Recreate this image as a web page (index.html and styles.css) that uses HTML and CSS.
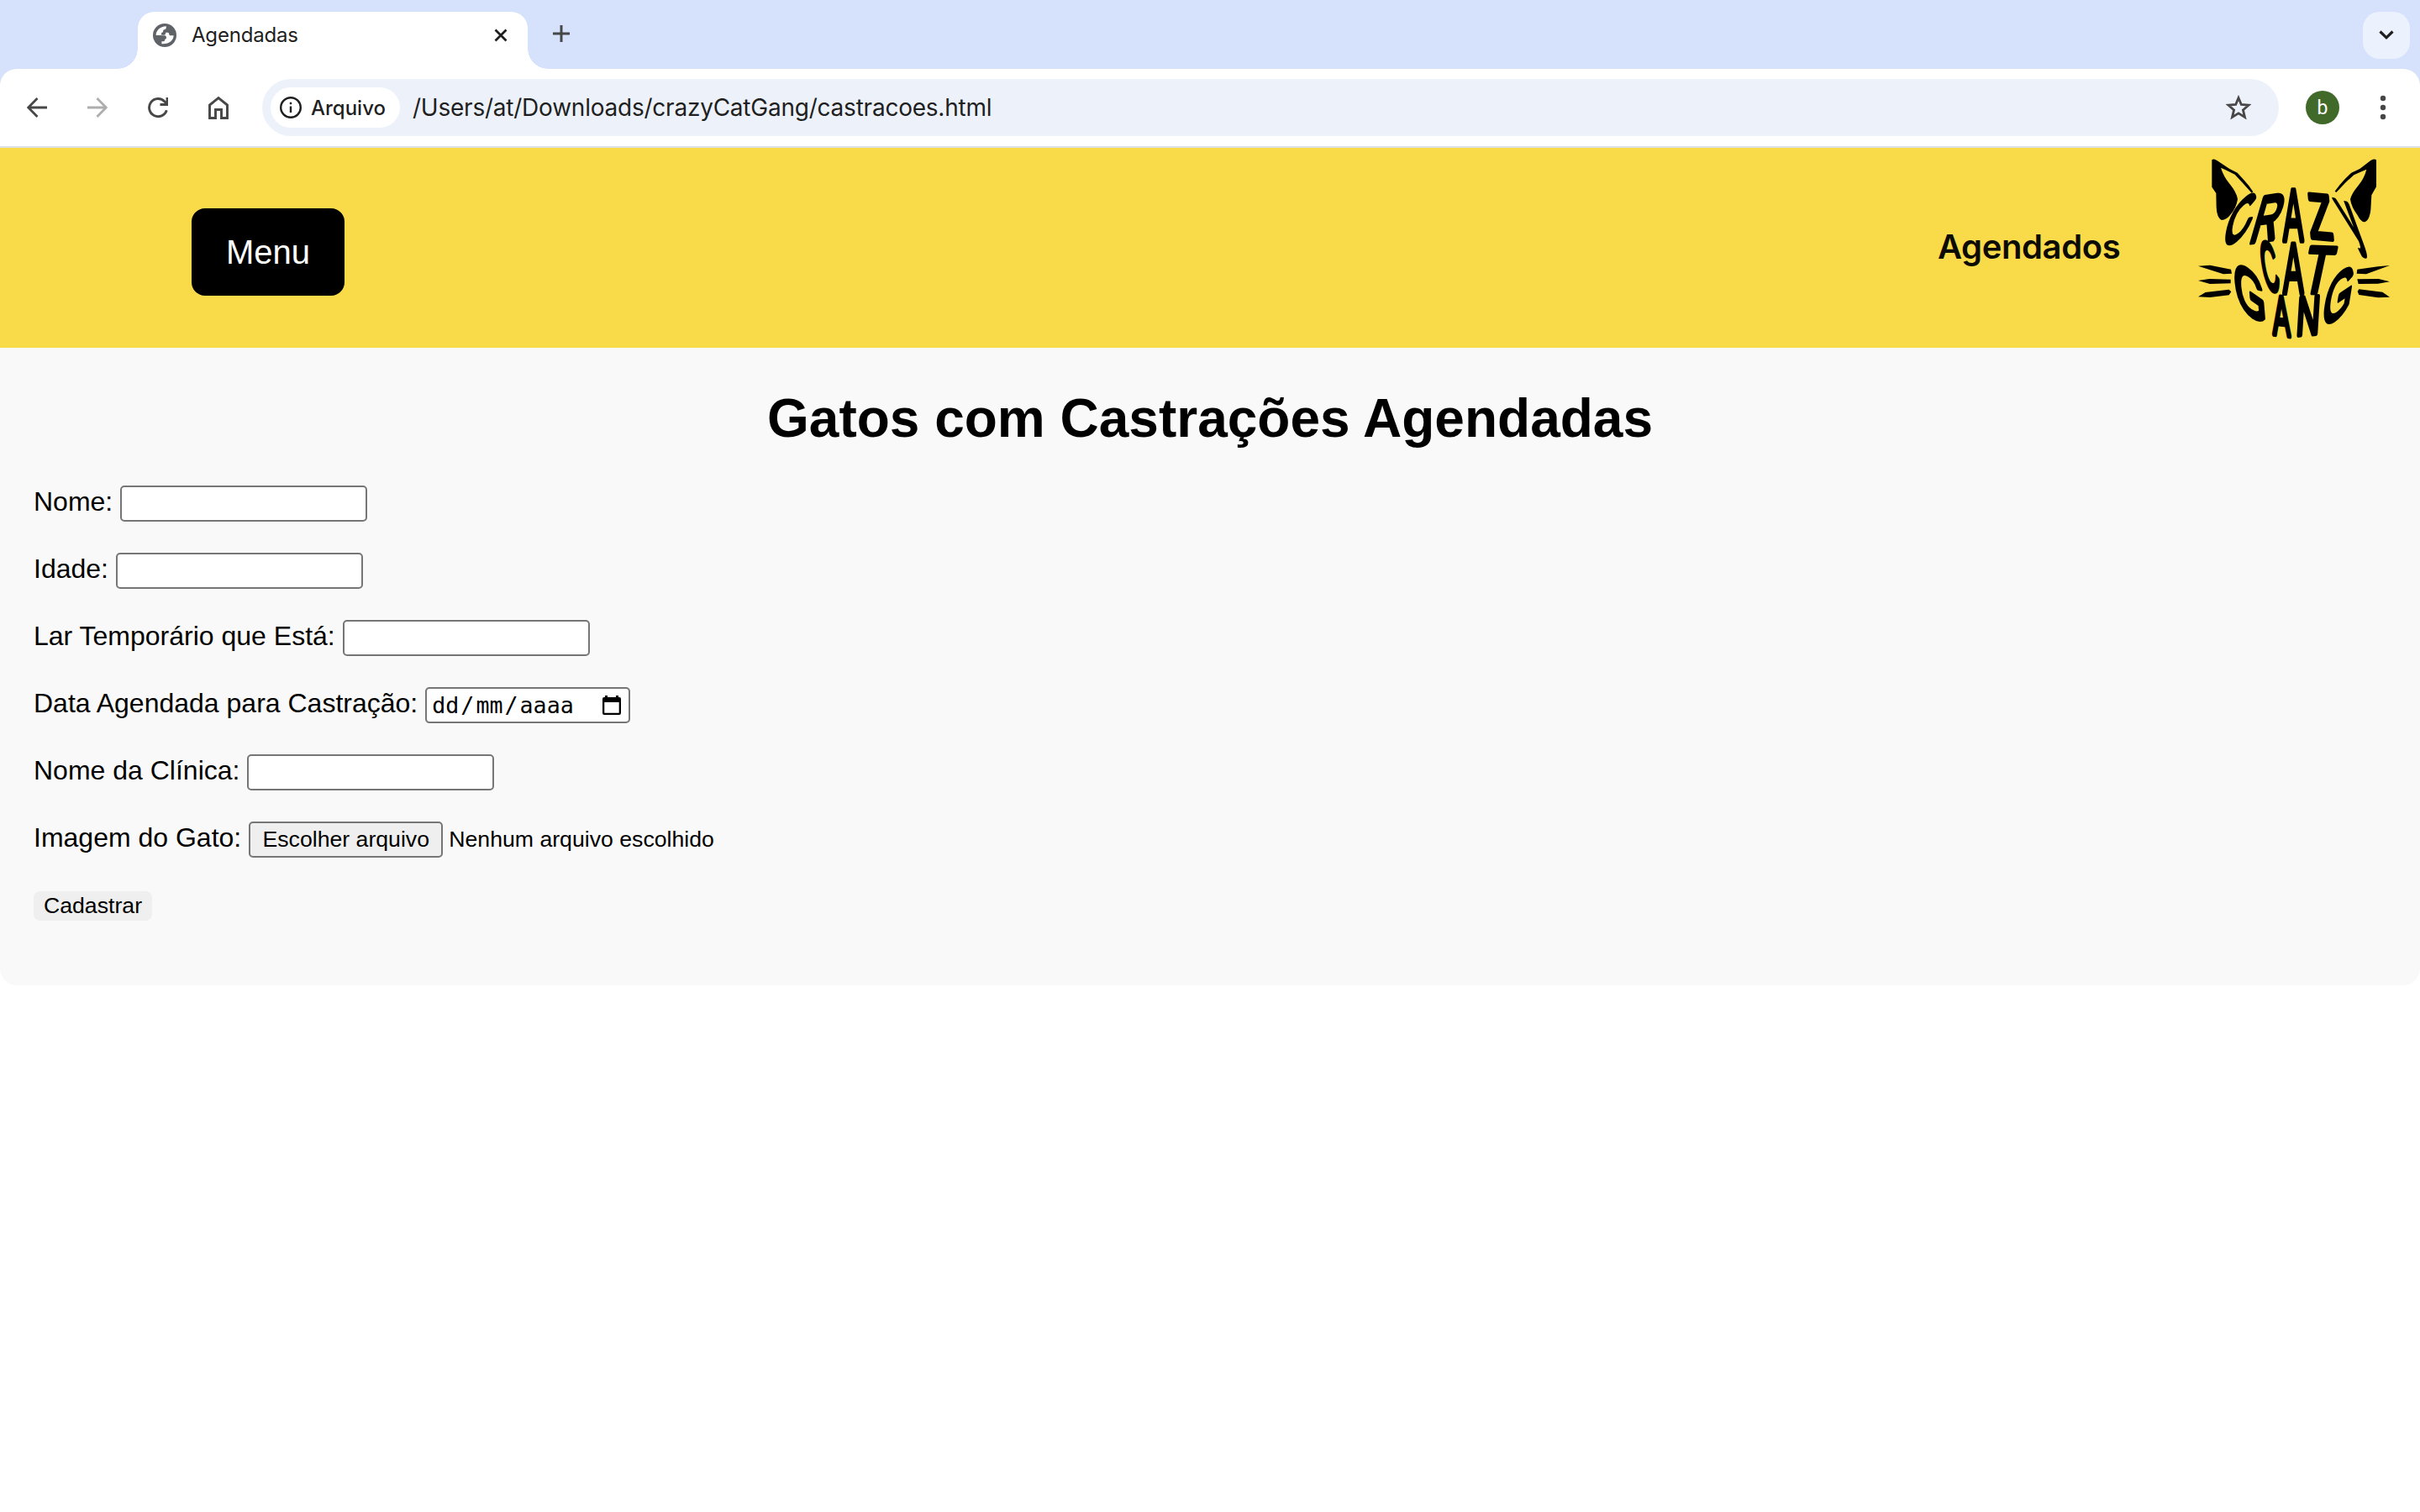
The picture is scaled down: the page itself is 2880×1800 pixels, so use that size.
FILE: index.html
```html
<!DOCTYPE html>
<html lang="pt-BR">
<head>
<meta charset="utf-8">
<title>Agendadas</title>
<link rel="stylesheet" href="styles.css">
</head>
<body>
<div class="browser">
  <div class="tabstrip">
    <div class="tab">
      <svg class="globe" viewBox="0 0 28 28"><circle cx="14" cy="14" r="14" fill="#5f6368"/><path d="M3.600 14C3.600 8.300 8.500 3.300 15.800 3.200V5q0 2-2.300 2.300-1.400.2-1.400 2 0 1.700-2 1.800v2.900zM15.200 10.800h2.300q1.800 0 1.800 2 0 1.500 1.700 1.500h3.600c.2 5.200-5 10.500-14.200 10v-3h2.200q1.600 0 1.600-1.800 0-1.500 1.700-1.500V16q0-1.700-2-1.800H10v-.4h3.300q1.900 0 1.900-3z" fill="#fff"/></svg>
      <span class="tab-title">Agendadas</span>
      <svg class="close" viewBox="0 0 16 16"><path d="M1.500 1.500l13 13M14.500 1.500l-13 13" stroke="#1f1f1f" stroke-width="2.800"/></svg>
    </div>
    <svg class="plus" viewBox="0 0 20 20"><path d="M10 0v20M0 10h20" stroke="#474747" stroke-width="3"/></svg>
    <div class="tab-search"><svg width="18" height="12" viewBox="0 0 18 12"><path d="M1.500 1.500L9 8.800l7.500-7.300" fill="none" stroke="#1f1f1f" stroke-width="3.200"/></svg></div>
  </div>
  <div class="toolbar">
    <svg class="nav" viewBox="0 0 24 28"><path d="M24 14H2M12.500 3L1.700 14l10.800 11" fill="none" stroke="#474747" stroke-width="2.800"/></svg>
    <svg class="nav" viewBox="0 0 24 28"><path d="M0 14h22M11.500 3l10.800 11-10.800 11" fill="none" stroke="#aeaeae" stroke-width="2.800"/></svg>
    <svg class="nav" viewBox="0 0 24 28"><path d="M22.300 17.200A10.600 10.600 0 1 1 20 6.900L22.500 10M14.500 10.500H23V2" fill="none" stroke="#474747" stroke-width="2.900"/></svg>
    <svg class="nav" viewBox="0 0 24 28"><path d="M1.500 26.500V11L12 2.700 22.500 11v15.500h-7v-10h-7v10z" fill="none" stroke="#474747" stroke-width="2.900"/></svg>
    <div class="omnibox">
      <div class="chip">
        <svg width="26" height="26" viewBox="0 0 26 26"><circle cx="13" cy="13" r="11.800" fill="none" stroke="#1f1f1f" stroke-width="2.400"/><path d="M13 11.500V19M13 6.800v2.500" stroke="#1f1f1f" stroke-width="2.400"/></svg>
        <span>Arquivo</span>
      </div>
      <span class="url">/Users/at/Downloads/crazyCatGang/castracoes.html</span>
      <svg class="star" viewBox="0 0 32 30"><path d="M16 3.500l3.300 8 8.700.7-6.600 5.700 2.100 8.500L16 21.800l-7.500 4.600 2.100-8.500L4 12.200l8.700-.7z" fill="none" stroke="#474747" stroke-width="2.800"/></svg>
    </div>
    <div class="avatar">b</div>
    <svg class="dots" viewBox="0 0 8 30"><g fill="#474747"><circle cx="4" cy="4" r="3.200"/><circle cx="4" cy="15" r="3.200"/><circle cx="4" cy="26" r="3.200"/></g></svg>
  </div>
</div>

<header class="site-header">
  <button class="menu">Menu</button>
  <div class="page-name">Agendados</div>
  <svg class="logo" viewBox="0 0 840 714">
    <g class="ears">
      <path d="M97 43q7-6 18 2l45 30 28 14 22 24q22 23 34 44l-5 4-35-39-25-27-35-17-15-7q10 32 31 57 25 30 29 55-5 32-25 55-15 20-32 20-17-7-19-46l-1-50-15-22z"/>
      <path d="M684 43q-9-6-20 2l-39 30-30 14-22 21q-22 23-37 45l5 4 35-37 28-25 27-12 18-8q-8 32-29 57-25 30-29 50 5 30 25 55 14 27 27 26 17-7 21-44l3-52 17-30z"/>
    </g>
    <g class="whiskers">
      <path d="M48 422l42-3 75 15 3 15-30 2zM48 474l40-6 76 2v14l-74 2zM48 532l26-16 84-10 8 8-8 12-68 8z"/>
      <path d="M732 420l-42 4-74 10-2 15 34 2zM732 478l-40-10-76 1 4 17 70-1zM732 533l-26-18-84-10-5 8 5 12 68 10z"/>
    </g>
    <g class="lettering">
      <text transform="matrix(1.450 -1.200 -.38 2.050 132 372)">C</text>
      <text transform="matrix(1.350 -.2 -.68 2.350 226 340)">R</text>
      <text transform="matrix(1.080 0 0 2.600 352 332)">A</text>
      <text transform="matrix(1.350 .12 .22 2.250 450 320)">Z</text>
      <text transform="matrix(1.050 .3 1.350 2.700 602 328)">y</text>
      <text transform="matrix(.8 .15 .4 2.450 287 503)">C</text>
      <text transform="matrix(1.080 0 0 2.550 352 518)">A</text>
      <text transform="matrix(1.600 .06 -.5 2.350 413 516)">T</text>
      <text transform="matrix(1.450 1 .2 2.350 183 560)">G</text>
      <text transform="matrix(.92 .12 .03 1.980 316 665)">A</text>
      <text transform="matrix(1.150 -.1 -.12 1.930 396 670)">N</text>
      <text transform="matrix(1.350 -.9 -.4 2.450 484 647)">G</text>
    </g>
  </svg>
</header>

<main class="panel">
  <h1>Gatos com Castrações Agendadas</h1>
  <form>
    <div class="row"><label for="nome">Nome:</label><input id="nome" type="text"></div>
    <div class="row"><label for="idade">Idade:</label><input id="idade" type="text"></div>
    <div class="row"><label for="lar">Lar Temporário que Está:</label><input id="lar" type="text"></div>
    <div class="row"><label>Data Agendada para Castração:</label>
      <div class="date"><span class="part">dd</span>/<span class="part">mm</span>/<span class="part">aaaa</span>
        <svg viewBox="0 0 22 24"><path d="M3 0h3v2h10V0h3v2h1q2 0 2 2v17q0 2-2 2H2q-2 0-2-2V4q0-2 2-2h1zM2.300 8v12.700h17.400V8z" fill="#000" fill-rule="evenodd"/></svg>
      </div>
    </div>
    <div class="row"><label for="clinica">Nome da Clínica:</label><input id="clinica" type="text"></div>
    <div class="row"><label>Imagem do Gato:</label><button type="button" class="file">Escolher arquivo</button><span class="file-name">Nenhum arquivo escolhido</span></div>
    <button type="button" class="submit">Cadastrar</button>
  </form>
</main>
</body>
</html>
```
FILE: styles.css
```css
* { box-sizing: border-box; }
body {
  margin: 0;
  background: #fff;
  color: #000;
  font-family: "Liberation Sans", Arial, sans-serif;
}
svg { display: block; flex: none; }
button { font-family: inherit; color: inherit; margin: 0; }

.browser { background: #d6e1fb; font-family: Inter, sans-serif; color: #1f1f1f; }
.tabstrip { height: 82px; display: flex; padding: 14px 12px 0 164px; }
.tab {
  position: relative;
  width: 464px;
  height: 68px;
  background: #fff;
  border-radius: 20px 20px 0 0;
  display: flex;
  align-items: center;
  padding: 0 24px 12px 18px;
}
.tab::before, .tab::after {
  content: "";
  position: absolute;
  bottom: 0;
  width: 24px;
  height: 24px;
}
.tab::before { right: 100%; background: radial-gradient(circle at 0 0, transparent 23.5px, #fff 24px); }
.tab::after { left: 100%; background: radial-gradient(circle at 100% 0, transparent 23.5px, #fff 24px); }
.globe { width: 28px; height: 28px; }
.tab-title { margin-left: 18px; font-size: 24px; line-height: 30px; letter-spacing: -0.2px; }
.close { width: 16px; height: 16px; margin-left: auto; }
.plus { width: 20px; height: 20px; margin: 16px 0 0 30px; }
.tab-search {
  margin-left: auto;
  width: 56px;
  height: 56px;
  border-radius: 20px;
  background: #ebf2fd;
  display: flex;
  align-items: center;
  justify-content: center;
}
.toolbar {
  height: 94px;
  background: #fff;
  border-radius: 20px 20px 0 0;
  border-bottom: 2px solid #dde1e3;
  display: flex;
  align-items: center;
  padding: 0 40px 0 32px;
}
.nav { width: 24px; height: 28px; margin-right: 48px; }
.omnibox {
  width: 2400px;
  height: 68px;
  margin-left: -8px;
  border-radius: 34px;
  background: #edf2fa;
  display: flex;
  align-items: center;
  padding: 0 32px 0 10px;
}
.chip {
  width: 154px;
  height: 48px;
  border-radius: 24px;
  background: #fff;
  display: flex;
  align-items: center;
  padding-left: 11px;
  gap: 11px;
  font-size: 24px;
  font-weight: 500;
}
.url { margin-left: 15px; font-size: 28px; letter-spacing: -0.23px; white-space: nowrap; }
.star { width: 32px; height: 30px; margin-left: auto; }
.avatar {
  width: 40px;
  height: 40px;
  margin-left: 32px;
  border-radius: 50%;
  background: #416a2a;
  color: #fff;
  font: 23px/41px Roboto, sans-serif;
  text-align: center;
}
.dots { width: 8px; height: 30px; margin-left: auto; }

.site-header {
  height: 238px;
  background: #f9db49;
  display: flex;
  align-items: flex-start;
}
.menu {
  width: 182px;
  height: 104px;
  margin: 72px 0 0 228px;
  padding: 0;
  border: 0;
  border-radius: 16px;
  background: #000;
  color: #fff;
  font-size: 40px;
}
.page-name {
  margin: 94px 0 0 auto;
  width: 294px;
  font: 600 40px/48px Inter, sans-serif;
  letter-spacing: -0.4px;
  color: #0c0b04;
}
.logo { width: 280px; height: 238px; }
.lettering text {
  font: 100px "Liberation Sans", sans-serif;
  stroke: #000;
  stroke-width: 4.8px;
  stroke-linejoin: round;
  vector-effect: non-scaling-stroke;
}

.panel {
  height: 759px;
  background: #f9f9f9;
  border-radius: 0 0 20px 20px;
  padding: 48px 40px 0;
}
h1 { margin: 0; font-size: 64px; line-height: 72px; text-align: center; }
form { margin-top: 44px; display: flex; flex-direction: column; gap: 36px; }
.row { height: 44px; display: flex; align-items: flex-start; }
label { font-size: 32px; line-height: 37px; margin: 1px 9px 0 0; white-space: nowrap; }
input, .date, .file {
  height: 43px;
  border: 2px solid #767676;
  border-radius: 5px;
  background: #fff;
}
input { width: 294px; margin: 0; padding: 2px 4px; font: 26.67px "Liberation Sans", sans-serif; }
.date {
  width: 244px;
  display: flex;
  align-items: center;
  padding: 0 9px 0 4px;
  font: 26.67px "DejaVu Sans Mono", monospace;
}
.part { padding: 0 2px; }
.date svg { width: 22px; height: 24px; margin-left: auto; }
.file { width: 231px; padding: 0; background: #efefef; font-size: 26.67px; }
.file-name { margin: 6px 0 0 7px; font-size: 26.67px; line-height: 30px; }
.submit {
  width: 141px;
  height: 35px;
  margin-top: 3px;
  padding: 0;
  border: 0;
  border-radius: 8px;
  background: #efefef;
  font-size: 26.67px;
  line-height: 35px;
}
```
